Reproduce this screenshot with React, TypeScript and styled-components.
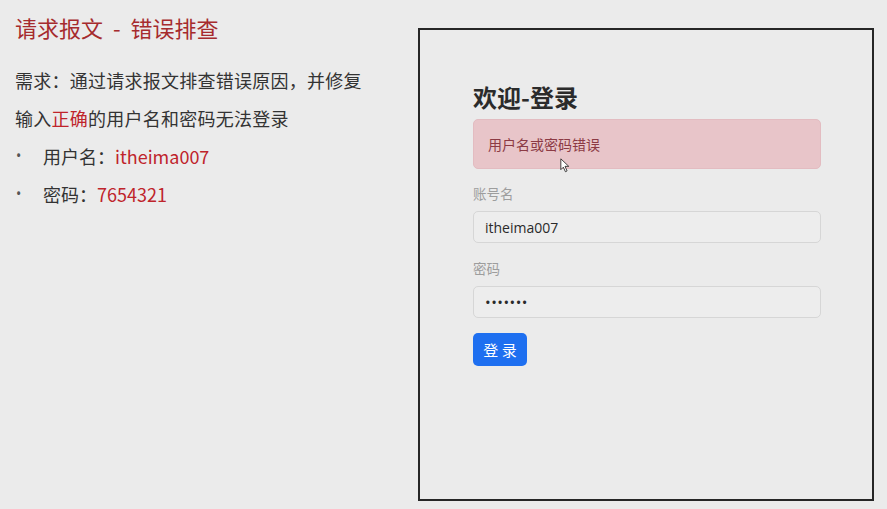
import styled, { createGlobalStyle } from 'styled-components';

const GlobalStyle = createGlobalStyle`
	html, body {
		margin: 0;
		padding: 0;
		background: #ebebeb;
	}
	body {
		font-family: 'Noto Sans CJK SC', 'Noto Sans', sans-serif;
	}
`;

const App = () => {
	return (
		<>
			<GlobalStyle />
			<Page>
				<Notes>
					<Title>请求报文 - 错误排查</Title>
					<Line>需求：通过请求报文排查错误原因，并修复</Line>
					<Line>
						输入<Mark>正确</Mark>的用户名和密码无法登录
					</Line>
					<BulletList>
						<Bullet>
							<Dot>•</Dot>
							<span>
								用户名：<Mark>itheima007</Mark>
							</span>
						</Bullet>
						<Bullet>
							<Dot>•</Dot>
							<span>
								密码：<Mark>7654321</Mark>
							</span>
						</Bullet>
					</BulletList>
				</Notes>
				<Frame>
					<Form onSubmit={e => e.preventDefault()}>
						<Heading>欢迎-登录</Heading>
						<Alert>
							用户名或密码错误
							<Cursor viewBox='0 0 12 18' width='10' height='15'>
								<path
									d='M1 1 L1 14 L4 11 L6.5 16.5 L8.5 15.5 L6 10 L10.5 10 Z'
									fill='#fff'
									stroke='#222'
									strokeWidth='1'
									strokeLinejoin='round'
								/>
							</Cursor>
						</Alert>
						<Label>账号名</Label>
						<Input type='text' defaultValue='itheima007' />
						<Label>密码</Label>
						<Input type='password' defaultValue='7654321' />
						<SubmitButton type='submit'>登 录</SubmitButton>
					</Form>
				</Frame>
			</Page>
		</>
	);
};

const Page = styled.div`
	display: flex;
	width: 887px;
	height: 509px;
	box-sizing: border-box;
	padding-left: 15px;
	overflow: hidden;
`;

const Notes = styled.div`
	width: 403px;
	padding-top: 8px;
	color: #333;
	font-size: 18px;
`;

const Title = styled.h1`
	margin: 0 0 15px;
	font-size: 22px;
	font-weight: 400;
	line-height: 38px;
	word-spacing: 5px;
	color: #a62b2e;
`;

const Line = styled.p`
	margin: 0;
	line-height: 38px;
	letter-spacing: 0.25px;
`;

const Mark = styled.span`
	color: #bf242b;
`;

const BulletList = styled.ul`
	margin: 0;
	padding: 0;
	list-style: none;
`;

const Bullet = styled.li`
	display: flex;
	line-height: 38px;
`;

const Dot = styled.span`
	width: 27px;
	padding-left: 1px;
	color: #555;
	font-family: 'Noto Sans', sans-serif;
	font-size: 14px;
`;

const Frame = styled.div`
	margin-top: 28px;
	width: 456px;
	height: 473px;
	box-sizing: border-box;
	border: 2px solid #262626;
	padding: 52px 0 0 53px;
`;

const Form = styled.form`
	display: flex;
	flex-direction: column;
	align-items: flex-start;
	width: 348px;
`;

const Heading = styled.h2`
	margin: 0 0 7px;
	font-size: 24px;
	font-weight: 700;
	line-height: 30px;
	color: #2b2b2b;
`;

const Alert = styled.div`
	position: relative;
	width: 100%;
	height: 50px;
	box-sizing: border-box;
	padding: 0 14px;
	display: flex;
	align-items: center;
	background: #e8c5c9;
	border: 1px solid #e3bcc1;
	border-radius: 5px;
	color: #8c3a44;
	font-size: 14px;
	margin-bottom: 14px;
`;

const Cursor = styled.svg`
	position: absolute;
	left: 86px;
	top: 38px;
`;

const Label = styled.label`
	font-size: 13.5px;
	line-height: 20px;
	color: #9d9d9d;
	margin-bottom: 8px;
`;

const Input = styled.input`
	width: 100%;
	height: 32px;
	box-sizing: border-box;
	padding: 0 11px;
	margin-bottom: 15px;
	background: #ededed;
	border: 1px solid #d6d6d6;
	border-radius: 5px;
	font-family: 'Open Sans', 'Noto Sans', sans-serif;
	font-size: 14px;
	color: #2a2a2a;
	outline: none;

	&[type='password'] {
		font-size: 15px;
		letter-spacing: 0.5px;
	}
`;

const SubmitButton = styled.button`
	width: 54px;
	height: 33px;
	border: none;
	border-radius: 5px;
	background: #1e6ff0;
	color: #fff;
	font-family: 'Noto Sans CJK SC', sans-serif;
	font-size: 15px;
	cursor: pointer;
`;

export default App;
